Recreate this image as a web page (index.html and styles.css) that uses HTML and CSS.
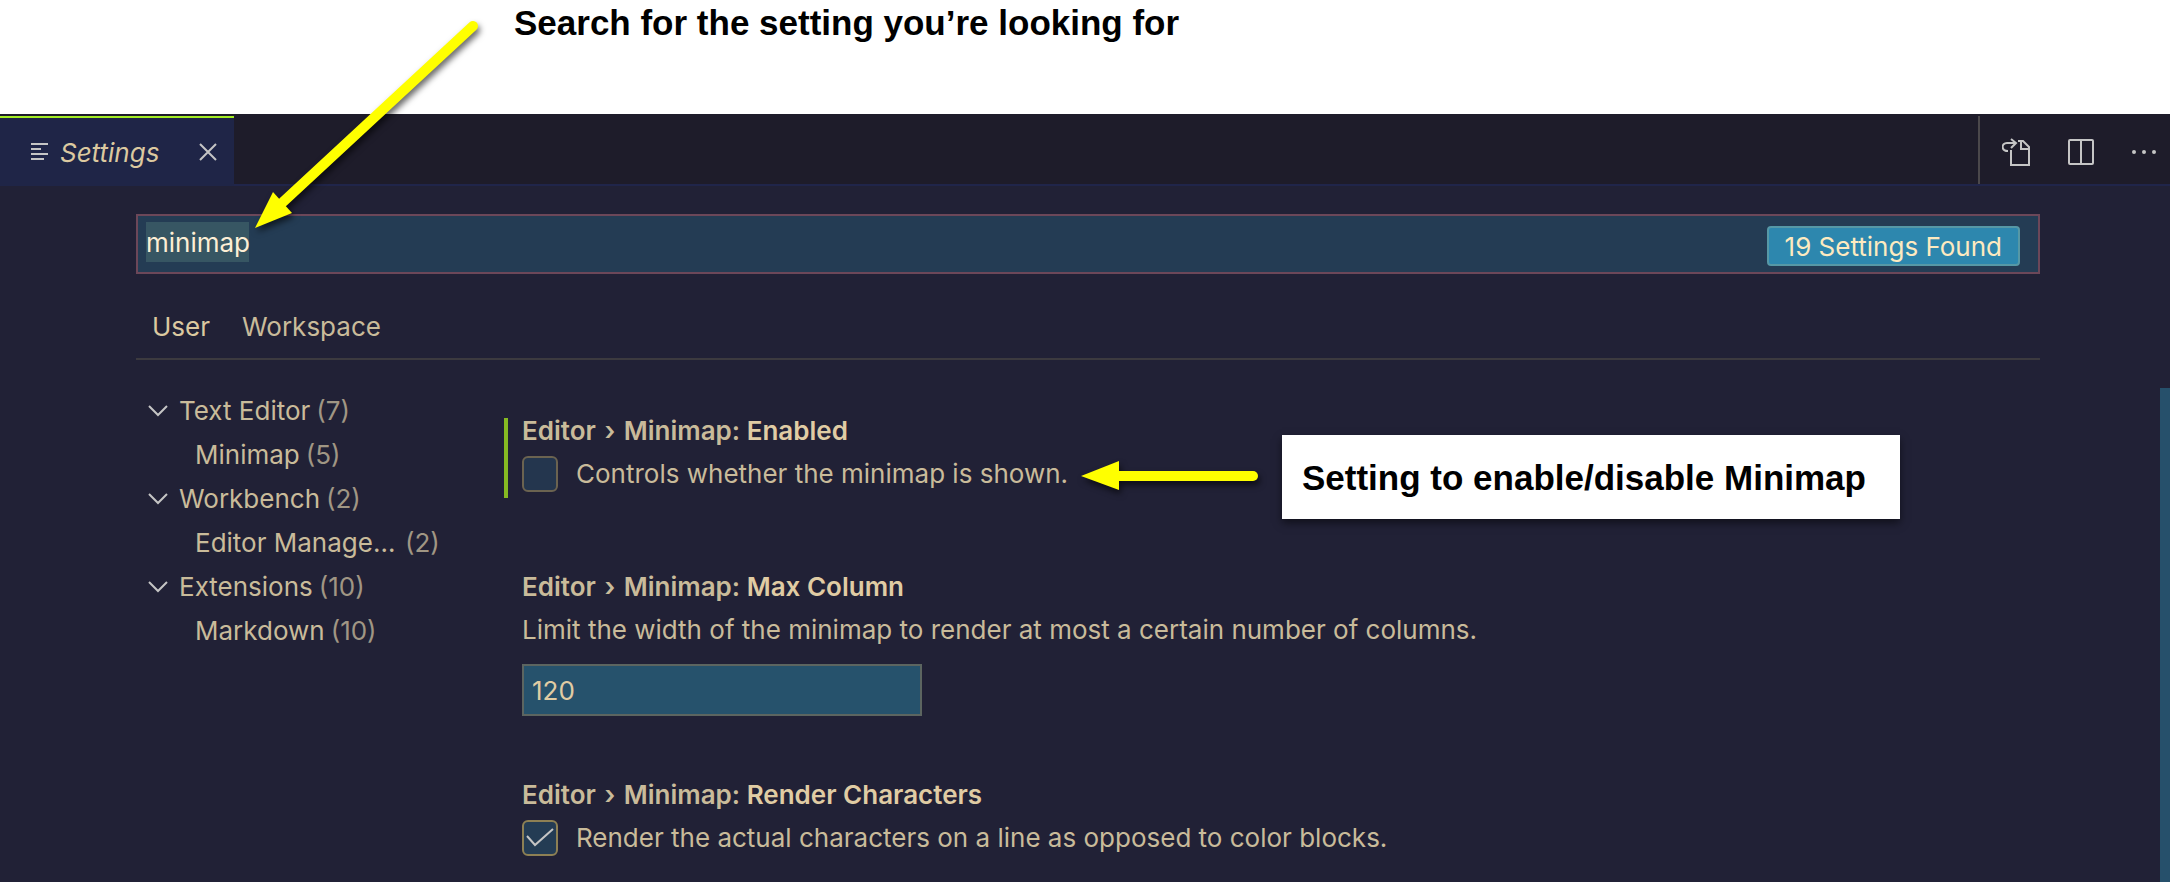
FILE: index.html
```html
<!DOCTYPE html>
<html lang="en">
<head>
<meta charset="utf-8">
<title>Settings</title>
<link rel="stylesheet" href="styles.css">
</head>
<body>
<div class="page">
  <header class="caption">Search for the setting you’re looking for</header>
  <div class="tabbar">
    <div class="tab">
      <svg class="tab-icon" viewBox="0 0 18 20" width="18" height="20"><path d="M0 2h17M0 7h10M0 12h17M0 17h13"/></svg>
      <span class="tab-label">Settings</span>
      <button class="icon-button" aria-label="Close"><svg viewBox="0 0 18 18" width="18" height="18"><path d="M1 1l16 16M17 1L1 17"/></svg></button>
    </div>
    <div class="actions">
      <button class="icon-button" aria-label="Open settings file"><svg viewBox="0 0 30 28" width="30" height="28"><path d="M9 12v15h18V9l-6-6h-5M19 3v8h8M6 13C-1 13-1 5 5 5h8M9 1l5 4-5 5"/></svg></button>
      <button class="icon-button" aria-label="Split editor"><svg viewBox="0 0 26 26" width="26" height="26"><rect x="1" y="1" width="24" height="24" rx="1"/><path d="M13 1v24"/></svg></button>
      <button class="icon-button" aria-label="More actions"><svg class="dots" viewBox="0 0 26 6" width="26" height="6"><circle cx="4" cy="3" r="2"/><circle cx="14" cy="3" r="2"/><circle cx="24" cy="3" r="2"/></svg></button>
    </div>
  </div>
  <main class="editor">
    <div class="search">
      <input class="search-input" type="text" value="minimap" aria-label="Search settings">
      <span class="found">19 Settings Found</span>
    </div>
    <nav class="scopes">
      <button class="scope active">User</button>
      <button class="scope">Workspace</button>
    </nav>
    <div class="columns">
      <ul class="tree">
        <li><svg class="chevron" viewBox="0 0 20 12" width="20" height="12"><path d="M1 1l9 9 9-9"/></svg><span>Text Editor</span> <span class="count">(7)</span></li>
        <li class="child"><span>Minimap</span> <span class="count">(5)</span></li>
        <li><svg class="chevron" viewBox="0 0 20 12" width="20" height="12"><path d="M1 1l9 9 9-9"/></svg><span>Workbench</span> <span class="count">(2)</span></li>
        <li class="child"><span class="clipped">Editor Manage…</span> <span class="count">(2)</span></li>
        <li><svg class="chevron" viewBox="0 0 20 12" width="20" height="12"><path d="M1 1l9 9 9-9"/></svg><span>Extensions</span> <span class="count">(10)</span></li>
        <li class="child"><span>Markdown</span> <span class="count">(10)</span></li>
      </ul>
      <div class="settings">
        <section class="setting modified">
          <h2 class="title"><span class="path">Editor <span class="sep">›</span> Minimap:</span> Enabled</h2>
          <label class="check"><input type="checkbox"><span>Controls whether the minimap is shown.</span></label>
        </section>
        <section class="setting with-input">
          <h2 class="title"><span class="path">Editor <span class="sep">›</span> Minimap:</span> Max Column</h2>
          <label class="description" for="max-column">Limit the width of the minimap to render at most a certain number of columns.</label>
          <input class="number" id="max-column" type="text" value="120">
        </section>
        <section class="setting">
          <h2 class="title"><span class="path">Editor <span class="sep">›</span> Minimap:</span> Render Characters</h2>
          <label class="check"><input type="checkbox" checked><svg class="tick" viewBox="0 0 36 36" width="36" height="36"><path d="M5 16l8 9L31 9"/></svg><span>Render the actual characters on a line as opposed to color blocks.</span></label>
        </section>
      </div>
    </div>
    <div class="scrollbar"></div>
  </main>
  <svg class="arrow arrow-search" viewBox="0 0 250 230" width="250" height="230"><path class="shaft" d="M223 16L33 192"/><path class="head" d="M5 218l18-36 19 21z"/></svg>
  <svg class="arrow arrow-setting" viewBox="0 0 190 60" width="190" height="60"><path class="shaft" d="M35 26H173"/><path class="head" d="M1 26l38-15v29z"/></svg>
  <aside class="note">Setting to enable/disable Minimap</aside>
</div>
</body>
</html>
```
FILE: styles.css
```css
* { box-sizing: border-box; }
body {
  margin: 0;
  font-family: Inter, "Noto Sans", sans-serif;
  font-size: 26px;
  line-height: 36px;
  color: #c9bb9a;
  background: #212136;
}
input, button { font: inherit; color: inherit; }
svg { flex: none; fill: none; stroke: #c5c5c5; stroke-width: 2; }
.page {
  position: relative;
  display: flex;
  flex-direction: column;
  min-height: 100vh;
  overflow: hidden;
}
.caption, .note {
  font-family: "Liberation Sans", Arial, sans-serif;
  font-weight: 700;
  font-size: 35px;
  line-height: 40px;
  color: #000;
  background: #fff;
}
.caption { height: 114px; padding: 3px 0 0 514px; }

.tabbar {
  display: flex;
  justify-content: space-between;
  height: 72px;
  padding-top: 2px;
  background: #1e1c2a;
  border-bottom: 2px solid #20254a;
}
.tab {
  display: flex;
  align-items: center;
  width: 234px;
  height: 70px;
  padding: 0 17px 0 31px;
  border-top: 2px solid #a4ee24;
  background: #1f2547;
}
.tab-icon { margin-right: 11px; }
.tab-label { flex: 1; padding-top: 2px; font-style: italic; color: #dcc9a0; }
.icon-button {
  display: flex;
  padding: 0;
  border: 0;
  background: none;
}
.actions {
  display: flex;
  align-items: center;
  gap: 36px;
  padding: 4px 14px 0 22px;
  border-left: 2px solid #4b484b;
}
svg.dots { fill: #c5c5c5; stroke: none; }

.editor {
  position: relative;
  flex: 1;
  padding: 28px 130px 0 136px;
}
.search {
  display: flex;
  align-items: flex-start;
  height: 60px;
  padding: 6px 18px 0 8px;
  border: 2px solid #6c4759;
  background: #243c54;
}
.search-input {
  flex: 1;
  height: 40px;
  padding: 0;
  border: 0;
  outline: 0;
  color: #fdeed5;
  background: linear-gradient(#375663, #375663) no-repeat 0 0 / 103px 40px;
}
.found {
  height: 40px;
  margin-top: 4px;
  padding: 0 16px;
  border: 2px solid #5698a6;
  border-radius: 4px;
  line-height: 38px;
  color: #fdeac0;
  background: #2d87ae;
}
.scopes {
  display: flex;
  align-items: flex-start;
  gap: 32px;
  height: 86px;
  padding: 35px 0 0 16px;
  border-bottom: 2px solid #3c3a3f;
}
.scope {
  padding: 0;
  border: 0;
  background: none;
}
.scope.active { color: #dcc9a0; }
.columns { display: flex; }
.tree {
  width: 368px;
  margin: 0;
  padding: 29px 0 0 12px;
  list-style: none;
  line-height: 44px;
}
.tree li { display: flex; gap: 6px; }
.tree li.child { padding-left: 47px; }
.chevron { align-self: center; margin-right: 5px; }
.count { color: #a09684; }
.clipped { min-width: 204px; }
.settings { flex: 1; padding-top: 58px; }
.setting {
  display: flex;
  flex-direction: column;
  align-items: flex-start;
  margin-bottom: 76px;
  padding: 0 0 6px 14px;
  border-left: 4px solid transparent;
}
.setting.with-input { margin-bottom: 60px; }
.setting:last-child { margin-bottom: 0; }
.setting.modified { border-color: #86ba22; }
.title {
  margin: 0;
  line-height: 26px;
  font-size: 26px;
  font-weight: 600;
  color: #e0cca4;
}
.path { color: #c9bb9a; }
.sep { margin: 0 2px; }
.check {
  position: relative;
  display: flex;
  gap: 18px;
  margin-top: 12px;
}
.check input {
  appearance: none;
  width: 36px;
  height: 36px;
  margin: 0;
  border: 2px solid #6b6350;
  border-radius: 6px;
  background: #24364e;
}
.check input:checked { border-color: #8d8054; background: #243c54; }
.tick {
  position: absolute;
  left: 0;
  top: 0;
  pointer-events: none;
}
.description { margin-top: 12px; }
.number {
  width: 400px;
  height: 52px;
  margin-top: 16px;
  padding: 0 8px;
  border: 2px solid #5c6560;
  color: #e0cca4;
  background: #26526c;
}
.scrollbar {
  position: absolute;
  top: 202px;
  right: 0;
  bottom: 0;
  width: 10px;
  background: #26506b;
}

.arrow {
  position: absolute;
  stroke: none;
  filter: drop-shadow(2px 4px 3px rgba(0, 0, 0, .6));
}
.arrow-search { left: 250px; top: 10px; }
.arrow-setting { left: 1080px; top: 450px; }
.shaft { stroke: #ff0; stroke-width: 10; stroke-linecap: round; }
.head { fill: #ff0; }
.note {
  position: absolute;
  left: 1282px;
  top: 435px;
  padding: 23px 34px 21px 20px;
  box-shadow: 0 4px 8px rgba(0, 0, 0, .5);
}
```
